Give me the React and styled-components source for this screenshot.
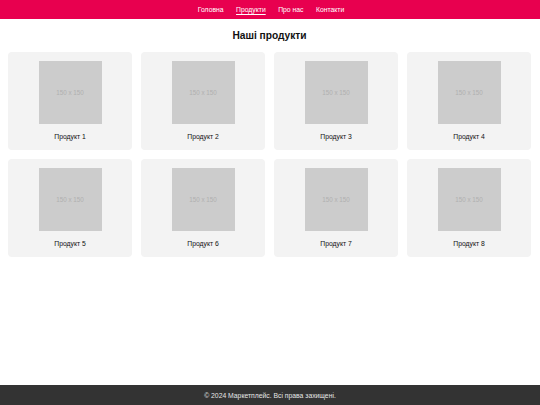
import React from "react";
import styled, { createGlobalStyle } from "styled-components";

const Global = createGlobalStyle`
  html, body { margin: 0; padding: 0; }
  body { font-family: "Liberation Sans", Arial, sans-serif; background: #fff; color: #111; }
  #root { min-height: 100vh; display: flex; flex-direction: column; }
`;

const Header = styled.header`
  height: 19px;
  background: #e8004f;
  display: flex;
  align-items: center;
  justify-content: center;
`;

const Nav = styled.nav`
  display: flex;
  gap: 12.5px;
  margin-left: 2px;
`;

const NavLink = styled.a`
  color: #fff;
  font-size: 6.8px;
  text-decoration: ${(p) => (p.$active ? "underline" : "none")};
  text-underline-offset: 1.5px;
`;

const Main = styled.main`
  flex: 1;
  padding: 0 9px 0 8px;
`;

const Title = styled.h1`
  margin: 10px 0 9px;
  text-align: center;
  font-size: 10.2px;
  line-height: 14px;
  font-weight: 700;
  color: #111;
`;

const Grid = styled.div`
  display: grid;
  grid-template-columns: repeat(4, 124px);
  gap: 9px;
`;

const Card = styled.div`
  background: #f3f3f3;
  border-radius: 4px;
  height: 98px;
  padding-top: 9px;
  box-sizing: border-box;
  display: flex;
  flex-direction: column;
  align-items: center;
`;

const Placeholder = styled.div`
  width: 63px;
  height: 63px;
  background: #cccccc;
  color: #b0b0b0;
  font-size: 6.3px;
  display: flex;
  align-items: center;
  justify-content: center;
`;

const Name = styled.div`
  margin-top: 8px;
  font-size: 6.8px;
  line-height: 9px;
  color: #111;
`;

const Footer = styled.footer`
  height: 20px;
  background: #333333;
  color: #e6e6e6;
  font-size: 6.8px;
  display: flex;
  align-items: center;
  justify-content: center;
`;

const links = ["Головна", "Продукти", "Про нас", "Контакти"];

export default function App() {
  return (
    <>
      <Global />
      <Header>
        <Nav>
          {links.map((l) => (
            <NavLink key={l} href="#" $active={l === "Продукти"}>
              {l}
            </NavLink>
          ))}
        </Nav>
      </Header>
      <Main>
        <Title>Наші продукти</Title>
        <Grid>
          {Array.from({ length: 8 }, (_, i) => (
            <Card key={i}>
              <Placeholder>150 x 150</Placeholder>
              <Name>Продукт {i + 1}</Name>
            </Card>
          ))}
        </Grid>
      </Main>
      <Footer>© 2024 Маркетплейс. Всі права захищені.</Footer>
    </>
  );
}
